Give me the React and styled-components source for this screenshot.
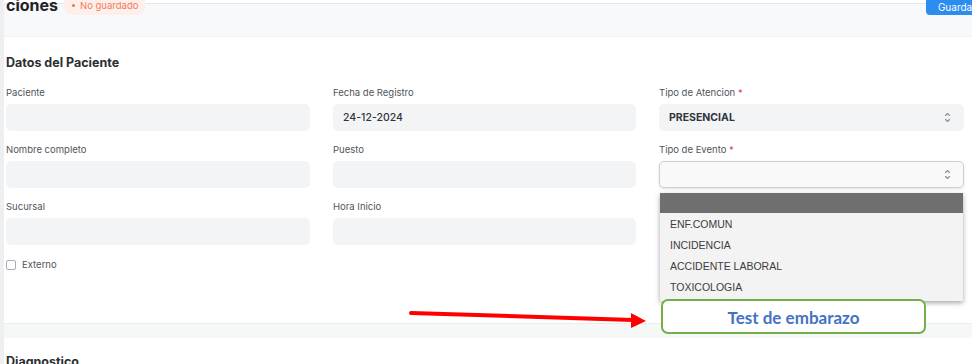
import React from 'react';
import styled, { createGlobalStyle } from 'styled-components';

const GlobalStyle = createGlobalStyle`
  html, body {
    margin: 0;
    padding: 0;
    background: #ffffff;
    overflow: hidden;
  }
  body {
    font-family: Inter, "Noto Sans", sans-serif;
  }
  * {
    box-sizing: border-box;
  }
`;

const Page = styled.div`
  position: relative;
  width: 972px;
  height: 364px;
  overflow: hidden;
  border-left: 4px solid #eeeff0;
  background: #ffffff;
`;

const Header = styled.div`
  margin-top: 3px;
  height: 34px;
  border-top: 1px solid #e4e5e6;
  border-bottom: 1px solid #eff0f1;
  background: #f8f9fa;
  display: flex;
  align-items: flex-start;
  padding-left: 2px;
`;

const Title = styled.h1`
  margin: -9px 0 0 0;
  font-size: 16px;
  line-height: 20px;
  font-weight: 700;
  color: #1f2328;
`;

const Badge = styled.span`
  margin: -11px 0 0 6px;
  height: 22px;
  padding: 2px 7px 0 8px;
  border-radius: 8px;
  background: #fdf0ea;
  color: #f37a5c;
  font-size: 9.5px;
  display: flex;
  align-items: center;
  gap: 5px;
  &::before {
    content: '';
    width: 3px;
    height: 3px;
    border-radius: 50%;
    background: #f26b4f;
  }
`;

const SaveButton = styled.button`
  margin: -10px -14px 0 auto;
  height: 21px;
  padding: 4px 10px 0 12px;
  border: none;
  border-radius: 4px;
  background: #2b8def;
  color: #ffffff;
  font-family: Inter, sans-serif;
  font-size: 10px;
`;

const Section = styled.section`
  padding: 0 7px 0 2px;
`;

const SectionTitle = styled.h2`
  margin: ${p => (p.$tight ? '16px' : '18px')} 0 0 0;
  font-size: 12.5px;
  line-height: 16px;
  font-weight: 700;
  color: #2b2f33;
`;

const FormGrid = styled.div`
  margin-top: 15px;
  display: grid;
  grid-template-columns: 304px 303px 305px;
  column-gap: 23px;
  row-gap: 12px;
`;

const Field = styled.div`
  position: relative;
  display: flex;
  flex-direction: column;
  gap: 4px;
`;

const Label = styled.label`
  font-size: 9.5px;
  line-height: 14px;
  color: #50555b;
  span {
    color: #e5484d;
  }
`;

const Input = styled.div`
  height: 27px;
  border-radius: 5px;
  background: ${p => (p.$open ? '#f9f9fa' : '#f3f4f6')};
  border: ${p => (p.$open ? '1px solid #cdd1d6' : '1px solid transparent')};
  box-shadow: ${p => (p.$open ? '0 1px 3px rgba(0,0,0,0.12)' : 'none')};
  display: flex;
  align-items: center;
  justify-content: space-between;
  padding: 0 12px 0 9px;
  font-size: 10.5px;
  font-weight: ${p => (p.$bold ? 700 : 500)};
  color: #30343a;
`;

const CheckRow = styled.div`
  margin-top: 14px;
  display: flex;
  align-items: center;
  gap: 6px;
  font-size: 9.5px;
  color: #50555b;
  height: 11px;
`;

const Checkbox = styled.span`
  width: 10px;
  height: 10px;
  border: 1px solid #a9adb3;
  border-radius: 2px;
  background: #ffffff;
`;

const Band = styled.div`
  margin-top: 53px;
  height: 15px;
  border-top: 1px solid #ececec;
  background: #f6f7f7;
`;

const Dropdown = styled.ul`
  position: absolute;
  top: calc(100% + 5px);
  left: 1px;
  right: 1px;
  margin: 0;
  padding: 0 0 3px 0;
  list-style: none;
  background: #f3f3f4;
  box-shadow: 0 2px 5px rgba(0, 0, 0, 0.35);
  font-family: "Liberation Sans", Arial, sans-serif;
  z-index: 2;
`;

const Option = styled.li`
  height: ${p => (p.$blank ? '20px' : '21px')};
  line-height: 21px;
  padding-left: 10px;
  font-size: 10.5px;
  color: #3d3d3d;
  background: ${p => (p.$blank ? '#6f6f6f' : 'transparent')};
  &:nth-child(2) {
    margin-top: 1px;
  }
`;

const Note = styled.div`
  position: absolute;
  left: 657px;
  top: 299px;
  width: 265px;
  height: 35px;
  border: 2px solid #72b04a;
  border-radius: 7px;
  background: #ffffff;
  display: flex;
  align-items: center;
  justify-content: center;
  padding-top: 1px;
  font-family: Lato, "Open Sans", sans-serif;
  font-weight: 700;
  font-size: 17px;
  color: #4472c4;
  z-index: 3;
`;

const Arrow = styled.svg`
  position: absolute;
  left: 403px;
  top: 306px;
  z-index: 3;
`;

function Chevrons() {
  return (
    <svg width="7" height="11" viewBox="0 0 7 11" fill="none" stroke="#8a8f96" strokeWidth="1.1" strokeLinecap="round" strokeLinejoin="round">
      <path d="M1.5 3.5 L3.5 1.5 L5.5 3.5" />
      <path d="M1.5 7.5 L3.5 9.5 L5.5 7.5" />
    </svg>
  );
}

const fields = [
  { label: 'Paciente' },
  { label: 'Fecha de Registro', value: '24-12-2024' },
  { label: 'Tipo de Atencion', required: true, value: 'PRESENCIAL', bold: true, select: true },
  { label: 'Nombre completo' },
  { label: 'Puesto' },
  { label: 'Tipo de Evento', required: true, select: true, open: true },
  { label: 'Sucursal' },
  { label: 'Hora Inicio' },
];

const eventOptions = ['ENF.COMUN', 'INCIDENCIA', 'ACCIDENTE LABORAL', 'TOXICOLOGIA'];

export default function App() {
  return (
    <>
      <GlobalStyle />
      <Page>
        <Header>
          <Title>ciones</Title>
          <Badge>No guardado</Badge>
          <SaveButton>Guardar</SaveButton>
        </Header>

        <Section>
          <SectionTitle>Datos del Paciente</SectionTitle>
          <FormGrid>
            {fields.map(f => (
              <Field key={f.label}>
                <Label>
                  {f.label}
                  {f.required && <span> *</span>}
                </Label>
                <Input $bold={f.bold} $open={f.open}>
                  <span>{f.value}</span>
                  {f.select && <Chevrons />}
                </Input>
                {f.open && (
                  <Dropdown>
                    <Option $blank />
                    {eventOptions.map(o => (
                      <Option key={o}>{o}</Option>
                    ))}
                  </Dropdown>
                )}
              </Field>
            ))}
          </FormGrid>
          <CheckRow>
            <Checkbox />
            Externo
          </CheckRow>
        </Section>

        <Band />

        <Section>
          <SectionTitle $tight>Diagnostico</SectionTitle>
        </Section>

        <Arrow width="242" height="24" viewBox="0 0 242 24">
          <path d="M4 7 L226 14" stroke="#ff0000" strokeWidth="4" strokeLinecap="round" />
          <polygon points="224,7 239,15 224,22" fill="#ff0000" />
        </Arrow>
        <Note>Test de embarazo</Note>
      </Page>
    </>
  );
}
